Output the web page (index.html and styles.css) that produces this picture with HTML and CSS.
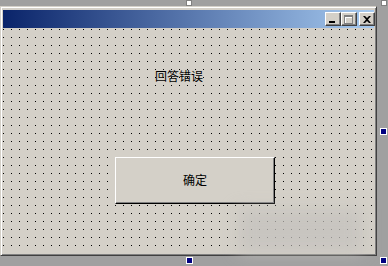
FILE: index.html
```html
<!DOCTYPE html>
<html lang="zh-CN">
<head>
  <meta charset="UTF-8" />
  <title>Form1</title>
  <link rel="stylesheet" href="styles.css">
</head>
<body>

  <div class="form">
    <div class="titlebar">
      <div class="caption-buttons">
        <span class="cap-btn"><span class="ico-min"></span></span>
        <span class="cap-btn"><span class="ico-max"></span></span>
        <span class="cap-btn close">
          <svg width="8" height="7" viewBox="0 0 8 7"><path d="M0 0h2l2 2 2-2h2L5 3.5 8 7H6L4 5 2 7H0l3-3.5z" fill="#000"/></svg>
        </span>
      </div>
    </div>
    <div class="client">
      <div class="label">回答错误</div>
      <div class="button">确定</div>
      <div class="watermark"></div>
    </div>
  </div>

  <span class="handle plain h-top"></span>
  <span class="handle plain h-topright"></span>
  <span class="handle grab h-right"></span>
  <span class="handle grab h-bottom"></span>
  <span class="handle grab h-corner"></span>

</body>
</html>
```

FILE: styles.css
```css
body { margin: 0; padding-top: 6px; background: #a0a0a0; font-family: "Noto Sans CJK SC", "Liberation Sans", sans-serif; font-size: 12px; width: 388px; height: 260px; overflow: hidden; }

.form { width: 377px; height: 250px; box-sizing: border-box; background: #d4d0c8; border: 1px solid; border-color: #d4d0c8 #404040 #404040 #d4d0c8; box-shadow: inset 1px 1px #fff, inset -1px -1px #808080; padding: 3px 2px 2px 2px; display: flex; flex-direction: column; }

.titlebar { height: 18px; background: linear-gradient(to right, #0a246a, #a6caf0); display: flex; justify-content: flex-end; align-items: center; flex-shrink: 0; }
.caption-buttons { display: flex; margin-right: -1px; }
.cap-btn { width: 16px; height: 14px; box-sizing: border-box; background: #d4d0c8; border: 1px solid; border-color: #fff #404040 #404040 #fff; box-shadow: inset -1px -1px #808080; display: flex; align-items: center; justify-content: center; }
.cap-btn.close { margin-left: 2px; }
.ico-min { width: 6px; height: 2px; background: #000; margin-top: 6px; margin-right: 2px; }
.ico-max { width: 7px; height: 6px; border: 1px solid #808080; border-top-width: 2px; box-shadow: inset 1px 1px #fff; margin-right: 1px; }
.close svg { display: block; margin-right: 1px; }

.client { flex: 1; position: relative; margin-top: 1px; background-color: #d4d0c8; background-image: conic-gradient(at 1px 1px, transparent 75%, #000 0); background-size: 8px 8px; background-position: 0 0; display: flex; flex-direction: column; align-items: flex-start; }

.label { margin: 40px 0 0 152px; color: #000; line-height: 14px; }

.button { margin: 74px 0 0 112px; width: 160px; height: 47px; box-sizing: border-box; background: #d4d0c8; border: 1px solid; border-color: #fff #000 #000 #fff; box-shadow: inset -1px -1px #808080; display: flex; align-items: center; justify-content: center; color: #000; padding-bottom: 3px; }

.watermark { position: absolute; left: 235px; top: 180px; width: 125px; height: 44px; background: rgba(196, 194, 190, 0.75); filter: blur(8px); }

.handle { position: absolute; width: 6px; height: 6px; box-sizing: border-box; }
.handle.plain { background: #fff; border: 1px solid #808080; }
.handle.grab { width: 7px; height: 7px; background: #000080; border: 1px solid #fff; }
.h-top { left: 186px; top: 0; }
.h-topright { left: 381px; top: 0; }
.h-right { left: 380px; top: 128px; }
.h-bottom { left: 186px; top: 257px; }
.h-corner { left: 380px; top: 257px; }
```
